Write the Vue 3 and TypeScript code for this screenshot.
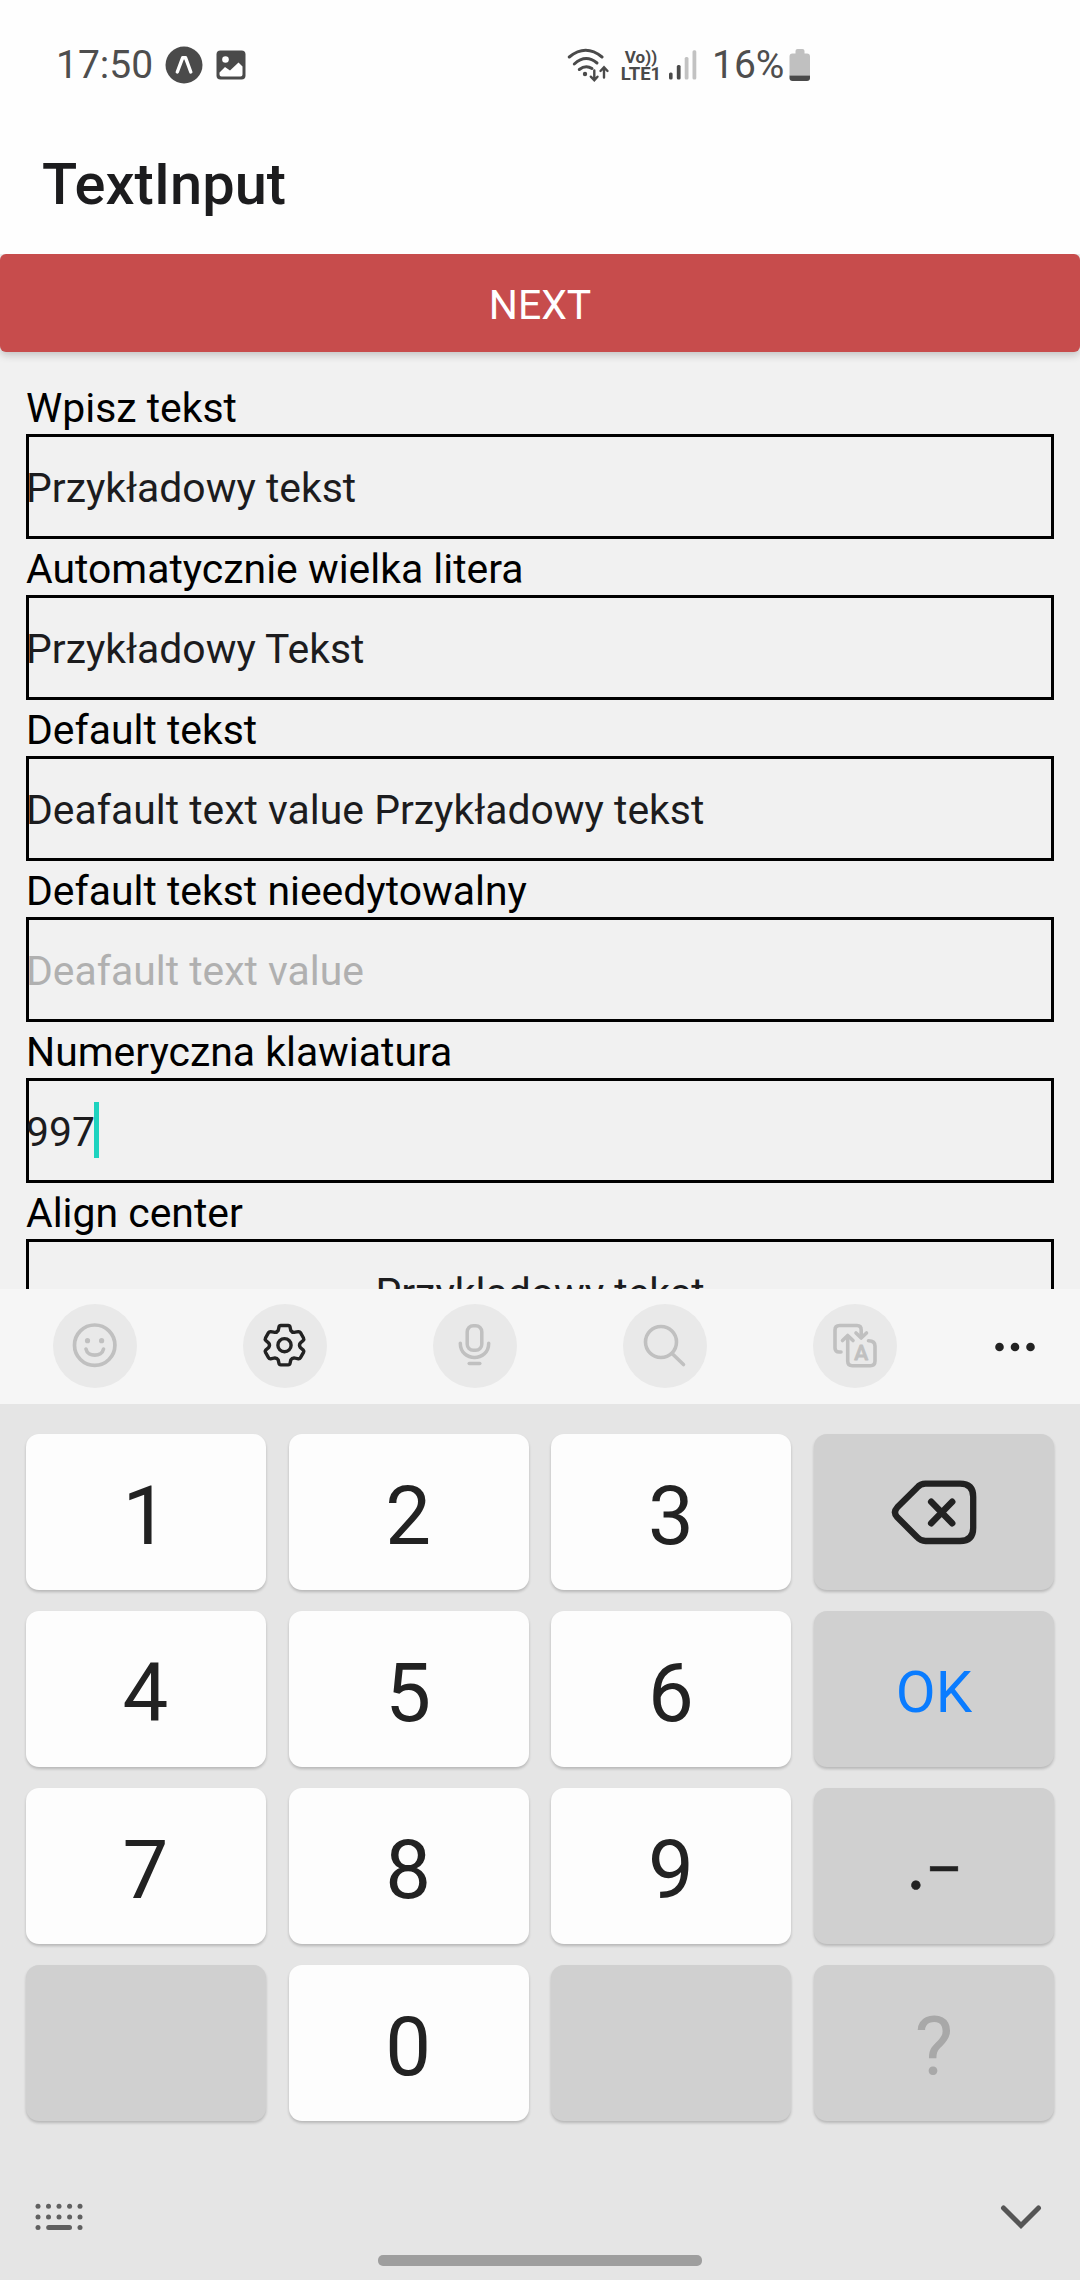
<script setup lang="ts">
interface Field {
  label: string
  value: string
  kind?: 'disabled' | 'focused' | 'center'
}

interface Key {
  text: string
  kind: 'digit' | 'func' | 'delete' | 'ok' | 'punct' | 'hint'
}

const fields: Field[] = [
  { label: 'Wpisz tekst', value: 'Przykładowy tekst' },
  { label: 'Automatycznie wielka litera', value: 'Przykładowy Tekst' },
  { label: 'Default tekst', value: 'Deafault text value Przykładowy tekst' },
  { label: 'Default tekst nieedytowalny', value: 'Deafault text value', kind: 'disabled' },
  { label: 'Numeryczna klawiatura', value: '997', kind: 'focused' },
  { label: 'Align center', value: 'Przykladowy tekst', kind: 'center' },
]

const keys: Key[] = [
  { text: '1', kind: 'digit' },
  { text: '2', kind: 'digit' },
  { text: '3', kind: 'digit' },
  { text: '', kind: 'delete' },
  { text: '4', kind: 'digit' },
  { text: '5', kind: 'digit' },
  { text: '6', kind: 'digit' },
  { text: 'OK', kind: 'ok' },
  { text: '7', kind: 'digit' },
  { text: '8', kind: 'digit' },
  { text: '9', kind: 'digit' },
  { text: '.–', kind: 'punct' },
  { text: '', kind: 'func' },
  { text: '0', kind: 'digit' },
  { text: '', kind: 'func' },
  { text: '?', kind: 'hint' },
]

const dotColumns = [4, 14.5, 25, 35.6, 46]
</script>

<template>
  <div class="screen">
    <header class="status">
      <div class="status-left">
        <span class="clock">17:50</span>
        <svg class="expo" width="38" height="38" viewBox="0 0 38 38">
          <circle cx="19" cy="19" r="18.5" fill="#4a4a4a" />
          <path d="M12.3 26 L17.6 11.8 H20.6 L25.8 26" fill="none" stroke="#fff" stroke-width="3.4" stroke-linejoin="round" stroke-linecap="round" />
        </svg>
        <svg width="30" height="30" viewBox="0 0 30 30">
          <rect x="0.5" y="0.5" width="29" height="29" rx="4" fill="#4a4a4a" />
          <circle cx="9.5" cy="9.5" r="3.3" fill="#fff" />
          <path d="M3.5 22.5 L9 17 L14 20.5 L22.5 12.5 L26.5 16.5 V24.5 Q26.5 26.5 24.5 26.5 H5.5 Q3.5 26.5 3.5 24.5 Z" fill="#fff" />
        </svg>
      </div>
      <div class="status-right">
        <svg class="wifi" width="44" height="36" viewBox="0 0 44 36" fill="none" stroke="#4a4a4a" stroke-width="3" stroke-linecap="round">
          <path d="M2.300 10 Q18.700 -3.500 35 10" />
          <path d="M7.300 17 Q18.700 6.500 30 16" />
          <path d="M12.300 22.500 Q18.700 17.500 25 21.500" />
          <circle cx="18" cy="27" r="2.200" fill="#4a4a4a" stroke="none" />
          <path d="M27.300 23.500 V33 M23.800 29.700 L27.300 33.200 L30.500 29.700" stroke-width="2.400" />
          <path d="M37 30.500 V20.500 M33.500 24 L37 20.300 L40.500 24" stroke-width="2.400" />
        </svg>
        <div class="volte"><span class="vo">Vo))</span><span class="lte">LTE1</span></div>
        <svg class="signal" width="28" height="30" viewBox="0 0 28 30">
          <rect x="0" y="22.500" width="3.600" height="7" rx="1.500" fill="#4a4a4a" />
          <rect x="7.800" y="15" width="3.800" height="14.500" rx="1.500" fill="#4a4a4a" />
          <rect x="15.700" y="7" width="3.800" height="22.500" rx="1.500" fill="#c2c2c2" />
          <rect x="23.500" y="0.300" width="3.800" height="29.200" rx="1.500" fill="#c2c2c2" />
        </svg>
        <span class="percent">16%</span>
        <svg class="battery" width="22" height="34" viewBox="0 0 22 34">
          <path d="M6.500 5.500 V3 Q6.500 1 8.500 1 H13.500 Q15.500 1 15.500 3 V5.500 H18 Q21 5.500 21 8.500 V27.500 H0.500 V8.500 Q0.500 5.500 3.500 5.500 Z" fill="#c0c0c0" />
          <path d="M0.500 27.500 H21 V30 Q21 33 18 33 H3.500 Q0.500 33 0.500 30 Z" fill="#4a4a4a" />
        </svg>
      </div>
    </header>

    <h1 class="title">TextInput</h1>

    <main class="content">
      <button class="next" type="button">NEXT</button>
      <section class="form">
        <div v-for="field in fields" :key="field.label" class="field">
          <label class="label">{{ field.label }}</label>
          <div class="input" :class="field.kind">
            <span>{{ field.value }}</span>
            <i v-if="field.kind === 'focused'" class="caret"></i>
          </div>
        </div>
      </section>
    </main>

    <section class="keyboard">
      <div class="toolbar">
        <div class="tool">
          <span class="round">
            <svg width="50" height="50" viewBox="0 0 50 50" fill="none" stroke="#c0c0c0" stroke-width="3.700" stroke-linecap="round">
              <circle cx="24.700" cy="24.200" r="20.200" />
              <path d="M16 28 C17.500 36.200 32 36.200 33.500 28" />
              <circle cx="17.500" cy="19.700" r="2.600" fill="#c0c0c0" stroke="none" />
              <circle cx="31.600" cy="19.700" r="2.600" fill="#c0c0c0" stroke="none" />
            </svg>
          </span>
        </div>
        <div class="tool">
          <span class="round">
            <svg width="50" height="50" viewBox="0 0 50 50" fill="none" stroke="#222" stroke-width="3.400" stroke-linejoin="round">
              <path d="M20.800 4.500 H28.200 Q29.700 4.500 30 5.900 L30.800 9.500 Q32.300 11.900 35.300 11.200 L38.400 10.600 Q39.800 10.500 40.500 11.700 L43.500 17 Q44.200 18.300 43.200 19.400 L40.300 22 Q38.700 24.200 40.300 26.400 L43.200 29 Q44.200 30.100 43.500 31.400 L40.500 36.700 Q39.800 37.900 38.400 37.800 L35.300 37.200 Q32.300 36.500 30.800 38.900 L30 42.500 Q29.700 43.900 28.200 43.900 H20.800 Q19.300 43.900 19 42.500 L18.200 38.900 Q16.700 36.500 13.700 37.200 L10.600 37.800 Q9.200 37.900 8.500 36.700 L5.500 31.400 Q4.800 30.100 5.800 29 L8.700 26.400 Q10.300 24.200 8.700 22 L5.800 19.400 Q4.800 18.300 5.500 17 L8.500 11.700 Q9.200 10.500 10.600 10.600 L13.700 11.200 Q16.700 11.900 18.200 9.500 L19 5.900 Q19.300 4.500 20.800 4.500 Z" />
              <circle cx="24.500" cy="24.200" r="6.600" />
            </svg>
          </span>
        </div>
        <div class="tool">
          <span class="round">
            <svg width="50" height="50" viewBox="0 0 50 50" fill="none" stroke="#c0c0c0" stroke-width="3.500" stroke-linecap="round">
              <rect x="17.200" y="4.700" width="14.600" height="24.500" rx="6" />
              <path d="M10.300 22.200 C10.300 41.200 38.700 41.200 38.700 22.200" />
              <path d="M19.200 42.500 H29.800" />
            </svg>
          </span>
        </div>
        <div class="tool">
          <span class="round">
            <svg width="50" height="50" viewBox="0 0 50 50" fill="none" stroke="#c0c0c0" stroke-width="3.600" stroke-linecap="round">
              <circle cx="21" cy="21" r="15.500" />
              <path d="M32.300 32.700 L43.500 43.500" />
            </svg>
          </span>
        </div>
        <div class="tool">
          <span class="round">
            <svg width="50" height="50" viewBox="0 0 50 50" fill="none" stroke="#c0c0c0" stroke-width="3.600" stroke-linecap="round" stroke-linejoin="round">
              <path d="M11 31 H9 Q5 31 5 27 V9 Q5 4.500 9.500 4.500 H27 Q31.200 4.500 31.200 9 V16" />
              <path d="M26 12 L31.200 17 L36.500 12" />
              <path d="M12.500 19.500 L17.700 14.500 L23 19.500" />
              <path d="M17.700 15.500 V40 Q17.700 44.700 22.400 44.700 H40.300 Q45 44.700 45 40 V25 Q45 19.700 38.500 19.700" />
              <text x="31.200" y="38.500" text-anchor="middle" font-size="21" font-weight="500" fill="#c0c0c0" stroke-width="0.800">A</text>
            </svg>
          </span>
        </div>
        <div class="tool more">
          <svg width="44" height="12" viewBox="0 0 44 12" fill="#222">
            <circle cx="6.500" cy="6" r="4.300" />
            <circle cx="22" cy="6" r="4.300" />
            <circle cx="37.500" cy="6" r="4.300" />
          </svg>
        </div>
      </div>

      <div class="keys">
        <div v-for="(key, i) in keys" :key="i" class="key" :class="key.kind">
          <svg v-if="key.kind === 'delete'" width="88" height="70" viewBox="0 0 88 70" fill="none" stroke="#222" stroke-linejoin="round" stroke-linecap="round">
            <path d="M35.500 6.700 H70 Q83.200 6.700 83.200 19.700 V51 Q83.200 64 70 64 H35.500 Q30.500 64 27 60 L7.300 40.300 Q2.600 35.300 7.300 30.300 L27 10.700 Q30.500 6.700 35.500 6.700 Z" stroke-width="6.300" />
            <path d="M41.200 24.700 L62.200 46.200 M62.200 24.700 L41.200 46.200" stroke-width="6.500" />
          </svg>
          <span v-else>{{ key.text }}</span>
        </div>
      </div>

      <footer class="nav">
        <svg width="50" height="30" viewBox="0 0 50 30" fill="#606060">
          <circle v-for="x in dotColumns" :key="'a' + x" :cx="x" cy="4.300" r="2.500" />
          <circle v-for="x in dotColumns" :key="'b' + x" :cx="x" cy="15" r="2.500" />
          <circle cx="4" cy="25.500" r="2.500" />
          <circle cx="46" cy="25.500" r="2.500" />
          <rect x="12.200" y="22.900" width="25.800" height="5.200" rx="2.500" />
        </svg>
        <svg width="42" height="26" viewBox="0 0 42 26" fill="none" stroke="#555" stroke-width="5" stroke-linecap="round" stroke-linejoin="miter">
          <path d="M3.500 4 L21 21.500 L38.500 4" />
        </svg>
      </footer>
      <div class="pill"></div>
    </section>
  </div>
</template>

<style>
body {
  margin: 0;
}
</style>

<style scoped>
.screen {
  width: 1080px;
  height: 2280px;
  display: flex;
  flex-direction: column;
  overflow: hidden;
  background: #fefefe;
  font-family: Roboto, "Liberation Sans", sans-serif;
  font-weight: 400;
}
.status {
  box-sizing: border-box;
  height: 130px;
  display: flex;
  color: #4e4e4e;
}
.status-left {
  width: 567px;
  display: flex;
  align-items: center;
  box-sizing: border-box;
  padding-left: 56px;
}
.clock,
.percent {
  font-size: 39px;
  line-height: 46px;
}
.clock {
  width: 109px;
}
.expo {
  margin-right: 13px;
}
.status-right {
  display: flex;
  align-items: center;
}
.volte {
  width: 42px;
  margin-left: 9px;
  padding-top: 2px;
  display: flex;
  flex-direction: column;
  align-items: center;
  font-weight: 700;
  color: #4a4a4a;
}
.vo {
  font-size: 17px;
  line-height: 16px;
}
.lte {
  font-size: 18.5px;
  line-height: 19px;
}
.signal {
  margin-left: 7px;
}
.percent {
  margin-left: 15px;
  width: 77px;
}
.title {
  margin: 0;
  height: 124px;
  padding: 0 0 0 42px;
  font-size: 57.75px;
  font-weight: 500;
  line-height: 108px;
  color: #1c1c1e;
}
.content {
  height: 1035px;
  overflow: hidden;
  background: #f1f1f1;
}
.next {
  display: flex;
  align-items: center;
  justify-content: center;
  width: 100%;
  height: 98px;
  border: 0;
  border-radius: 6px;
  padding: 3px 0 0;
  background: #c74c4c;
  color: #fff;
  font: 400 40.9px Roboto, sans-serif;
  box-shadow: 0 3px 8px rgba(0, 0, 0, 0.2);
}
.form {
  padding: 26px 26px 0;
}
.field {
  height: 161px;
}
.label {
  display: block;
  height: 56px;
  font-size: 40.9px;
  line-height: 61px;
  color: #000;
}
.input {
  box-sizing: border-box;
  height: 105px;
  border: 3px solid #000;
  display: flex;
  align-items: center;
  font-size: 40.9px;
  line-height: 56px;
  color: #1c1c1e;
}
.input span {
  margin-left: -3px;
  padding-top: 2px;
}
.input.disabled {
  color: #b0b0b0;
}
.input.center {
  justify-content: center;
}
.input.center span {
  margin-left: 0;
}
.caret {
  width: 5px;
  height: 56px;
  margin: -2px 0 0 -1px;
  background: #1dd3bf;
}
.keyboard {
  height: 991px;
  background: #e5e5e5;
  display: flex;
  flex-direction: column;
}
.toolbar {
  height: 115px;
  display: flex;
  background: #f6f6f6;
}
.tool {
  box-sizing: border-box;
  width: 190px;
  padding-bottom: 1px;
  display: flex;
  align-items: center;
  justify-content: center;
}
.tool.more {
  width: 130px;
  padding: 0;
}
.round {
  width: 84px;
  height: 84px;
  border-radius: 50%;
  background: #e9e9e9;
  display: flex;
  align-items: center;
  justify-content: center;
}
.keys {
  padding: 30px 26px 0;
  display: grid;
  grid-template-columns: repeat(4, 240px);
  justify-content: space-between;
  grid-auto-rows: 156px;
  row-gap: 21px;
}
.key {
  display: flex;
  align-items: center;
  justify-content: center;
  border-radius: 13px;
  background: #d0d0d0;
  box-shadow: 0 2px 3px rgba(0, 0, 0, 0.2);
  font-size: 81.5px;
  line-height: 96px;
  color: #222;
}
.key.digit {
  background: #fdfdfd;
}
.key span {
  padding-top: 8px;
}
.key.digit span {
  padding-right: 1px;
}
.key.ok {
  font-size: 58px;
  color: #0a7cff;
}
.key.ok span {
  padding-top: 5px;
}
.key.punct {
  font-family: Lato, sans-serif;
  font-size: 69px;
  -webkit-text-stroke: 0.6px #222;
}
.key.punct span {
  padding: 0 0 6px 4px;
}
.key.hint {
  color: #a8a8a8;
}
.nav {
  margin-top: 81px;
  padding: 0 38px 0 34px;
  display: flex;
  justify-content: space-between;
  height: 30px;
  align-items: center;
}
.pill {
  width: 324px;
  height: 11px;
  margin: 23px auto 0;
  border-radius: 5px;
  background: #9e9e9e;
}
</style>
